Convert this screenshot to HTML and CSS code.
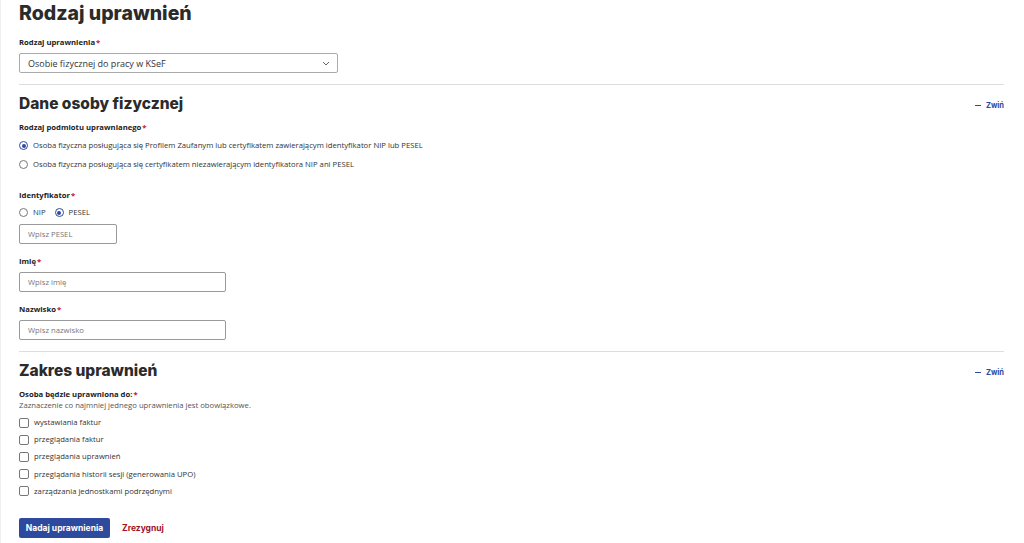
FILE: index.html
```html
<!DOCTYPE html>
<html lang="pl">

<head>
    <meta charset="UTF-8">
    <meta name="viewport" content="width=device-width, initial-scale=1">
    <title>Nadaj uprawnienia</title>
    <link rel="stylesheet" href="styles.css">
</head>

<body>

    <div class="page">
        <section class="section first">
            <h1 class="title big">Rodzaj uprawnień</h1>
            <label class="label">Rodzaj uprawnienia<span class="req">*</span></label>
            <div class="select">
                <span>Osobie fizycznej do pracy w KSeF</span>
                <svg width="8" height="5" viewBox="0 0 8 5"><path d="M1 1l3 3 3-3" fill="none" stroke="#666" stroke-width="1"/></svg>
            </div>
        </section>

        <section class="section">
            <div class="section-head">
                <h2 class="title">Dane osoby fizycznej</h2>
                <a class="collapse" href="#"><span class="dash"></span>Zwiń</a>
            </div>

            <label class="label">Rodzaj podmiotu uprawnianego<span class="req">*</span></label>
            <div class="radio-list">
                <label class="radio"><span class="dot checked"></span>Osoba fizyczna posługująca się Profilem Zaufanym lub certyfikatem zawierającym identyfikator NIP lub PESEL</label>
                <label class="radio"><span class="dot"></span>Osoba fizyczna posługująca się certyfikatem niezawierającym identyfikatora NIP ani PESEL</label>
            </div>

            <div class="field id-field">
                <label class="label">Identyfikator<span class="req">*</span></label>
                <div class="radio-row">
                    <label class="radio"><span class="dot"></span>NIP</label>
                    <label class="radio"><span class="dot checked"></span>PESEL</label>
                </div>
                <div class="input short">Wpisz PESEL</div>
            </div>

            <div class="field">
                <label class="label">Imię<span class="req">*</span></label>
                <div class="input medium">Wpisz imię</div>
            </div>

            <div class="field">
                <label class="label">Nazwisko<span class="req">*</span></label>
                <div class="input medium">Wpisz nazwisko</div>
            </div>
        </section>

        <section class="section">
            <div class="section-head">
                <h2 class="title">Zakres uprawnień</h2>
                <a class="collapse" href="#"><span class="dash"></span>Zwiń</a>
            </div>

            <label class="label">Osoba będzie uprawniona do:<span class="req">*</span></label>
            <p class="hint">Zaznaczenie co najmniej jednego uprawnienia jest obowiązkowe.</p>
            <div class="check-list">
                <label class="check"><span class="box"></span>wystawiania faktur</label>
                <label class="check"><span class="box"></span>przeglądania faktur</label>
                <label class="check"><span class="box"></span>przeglądania uprawnień</label>
                <label class="check"><span class="box"></span>przeglądania historii sesji (generowania UPO)</label>
                <label class="check"><span class="box"></span>zarządzania jednostkami podrzędnymi</label>
            </div>

            <div class="actions">
                <button class="primary">Nadaj uprawnienia</button>
                <a class="cancel" href="#">Zrezygnuj</a>
            </div>
        </section>
    </div>

</body>

</html>
```

FILE: styles.css
```css
body {
    margin: 0;
    font-family: "Open Sans", Arial, sans-serif;
    font-size: 7.7px;
    color: #333;
    background: #fff;
}

.page {
    border-left: 1px solid #eee;
    min-height: 543px;
    padding: 0 20px 0 18px;
    box-sizing: border-box;
}

.section {
    border-top: 1px solid #ddd;
    padding-top: 9px;
    padding-bottom: 11px;
}

.section.first {
    border-top: none;
    padding-top: 1px;
    padding-bottom: 11px;
}

.title {
    font-family: Inter, Arial, sans-serif;
    font-weight: 800;
    font-size: 15.5px;
    line-height: 20px;
    color: #2b2b2b;
    margin: 0 0 8px;
}

.title.big {
    font-size: 19.5px;
    line-height: 24px;
    margin-bottom: 12px;
}

.section-head {
    display: flex;
    justify-content: space-between;
    align-items: center;
    margin-bottom: 8px;
}

.section-head .title {
    margin: 0;
}

.collapse {
    font-family: Inter, Arial, sans-serif;
    font-weight: 700;
    font-size: 7.5px;
    color: #2d4a9e;
    text-decoration: none;
    display: flex;
    align-items: center;
    gap: 5px;
    margin-top: 2px;
}

.dash {
    width: 6px;
    height: 1px;
    background: #2d4a9e;
}

.label {
    display: block;
    font-weight: 700;
    font-size: 7.7px;
    line-height: 10px;
    color: #222;
}

.req {
    color: #c8102e;
    margin-left: 1px;
}

.select {
    width: 319px;
    height: 20px;
    margin-top: 6px;
    border: 1px solid #aaa;
    border-radius: 2px;
    box-sizing: border-box;
    display: flex;
    align-items: center;
    justify-content: space-between;
    padding: 0 7px 0 8px;
    font-size: 9px;
    color: #333;
}

.radio-list {
    margin-top: 8px;
    display: flex;
    flex-direction: column;
    gap: 8px;
}

.radio,
.check {
    display: flex;
    align-items: center;
    gap: 5px;
    line-height: 11px;
    color: #333;
}

.dot {
    width: 9px;
    height: 9px;
    border: 1px solid #777;
    border-radius: 50%;
    box-sizing: border-box;
    position: relative;
}

.dot.checked {
    border-color: #2d4a9e;
}

.dot.checked::after {
    content: "";
    position: absolute;
    inset: 1.5px;
    border-radius: 50%;
    background: #2d4a9e;
}

.id-field {
    margin-top: 20px;
}

.radio-row {
    display: flex;
    gap: 9px;
    margin-top: 7px;
}

.field {
    margin-bottom: 12px;
}

.field:last-child {
    margin-bottom: 0;
}

.input {
    height: 20px;
    margin-top: 6px;
    border: 1px solid #999;
    border-radius: 2px;
    box-sizing: border-box;
    display: flex;
    align-items: center;
    padding: 0 8px;
    color: #777;
}

.short {
    width: 98px;
}

.medium {
    width: 207px;
}

.hint {
    margin: 1px 0 0;
    line-height: 10px;
    color: #555;
}

.check-list {
    margin-top: 7px;
    display: flex;
    flex-direction: column;
    gap: 6.2px;
}

.box {
    width: 10px;
    height: 10px;
    border: 1px solid #777;
    border-radius: 2px;
    box-sizing: border-box;
}

.actions {
    margin-top: 21px;
    display: flex;
    align-items: center;
    gap: 12px;
}

.primary {
    font-family: Inter, Arial, sans-serif;
    font-weight: 700;
    font-size: 8.5px;
    color: #fff;
    background: #2d4a9e;
    border: none;
    border-radius: 2px;
    height: 20px;
    width: 91px;
    padding: 0;
    cursor: pointer;
}

.cancel {
    font-family: Inter, Arial, sans-serif;
    font-weight: 700;
    font-size: 8.5px;
    color: #a0121e;
    text-decoration: none;
}
```
